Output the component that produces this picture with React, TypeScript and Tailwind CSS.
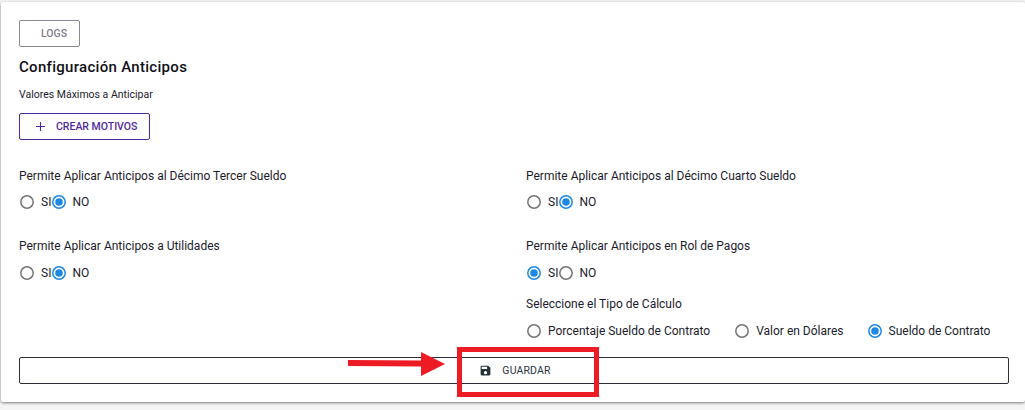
function Radio({ label, checked, gap = 'ml-2' }: { label: string; checked?: boolean; gap?: string }) {
  return (
    <label className="flex items-center">
      <svg width="14" height="14" viewBox="0 0 14 14" fill="none">
        <circle cx="7" cy="7" r="6.2" stroke={checked ? '#1e88e5' : '#757575'} strokeWidth="1.5" />
        {checked && <circle cx="7" cy="7" r="3.8" fill="#1e88e5" />}
      </svg>
      <span className={gap + ' text-[12px] text-[#1b1b2b]'}>{label}</span>
    </label>
  );
}

function Question({ title, si, top, radioTop }: { title: string; si?: boolean; top: string; radioTop: string }) {
  return (
    <div className={top}>
      <div className="h-[14px] text-[12px] leading-[14px] text-[#1b1b2b]">{title}</div>
      <div className={radioTop + ' flex h-[14px] items-center pl-[1px]'}>
        <Radio label="SI" checked={si} gap="ml-[7px]" />
        <div className="ml-[1px]">
          <Radio label="NO" checked={!si} gap="ml-[6px]" />
        </div>
      </div>
    </div>
  );
}

export default function App() {
  return (
    <div className="h-[410px] w-[1025px] overflow-hidden bg-[#f5f5f5] pl-[1px] pt-[2px] font-['Roboto',sans-serif]">
      <div className="relative h-[400px] w-[1024px] rounded-[2px] bg-white pl-[18px] pr-[16px] pt-[18px] shadow-[0_1px_3px_rgba(0,0,0,0.5)]">
        <button className="flex h-[27px] w-[61px] items-center justify-end rounded-[2px] border border-[#8a8a96] pr-[12px] text-[10.5px] font-medium text-[#80808c]">
          LOGS
        </button>
        <h1 className="mt-[11px] h-[18px] text-[15px] font-medium leading-[18px] tracking-[0.3px] text-[#0f0f17]">
          Configuración Anticipos
        </h1>
        <p className="mt-[12px] h-[14px] text-[10.5px] leading-[14px] text-[#1b1b2b]">Valores Máximos a Anticipar</p>
        <button className="mt-[11px] flex h-[27px] w-[131px] items-center rounded-[2px] border border-[#4c2a9e] pl-[15px] text-[10.5px] font-medium text-[#4c2a9e]">
          <svg width="11" height="11" viewBox="0 0 11 11" fill="none" stroke="#4c2a9e" strokeWidth="1.1">
            <path d="M5.500 1v9M1 5.500h9" />
          </svg>
          <span className="ml-[10px]">CREAR MOTIVOS</span>
        </button>

        <div className="mt-[29px] grid grid-cols-[507px_1fr]">
          <Question title="Permite Aplicar Anticipos al Décimo Tercer Sueldo" top="" radioTop="mt-[12px]" />
          <Question title="Permite Aplicar Anticipos al Décimo Cuarto Sueldo" top="" radioTop="mt-[12px]" />
          <Question title="Permite Aplicar Anticipos a Utilidades" top="mt-[30px]" radioTop="mt-[13px]" />
          <Question title="Permite Aplicar Anticipos en Rol de Pagos" si top="mt-[30px]" radioTop="mt-[13px]" />
          <div />
          <div className="mt-[17px]">
            <div className="h-[14px] text-[12px] leading-[14px] text-[#1b1b2b]">Seleccione el Tipo de Cálculo</div>
            <div className="mt-[13px] flex h-[14px] items-center pl-[1px]">
              <Radio label="Porcentaje Sueldo de Contrato" gap="ml-[7px]" />
              <div className="ml-[25px]">
                <Radio label="Valor en Dólares" gap="ml-[7px]" />
              </div>
              <div className="ml-[24px]">
                <Radio label="Sueldo de Contrato" checked gap="ml-[7px]" />
              </div>
            </div>
          </div>
        </div>

        <button className="mt-[19px] flex h-[27px] w-[990px] items-center justify-center rounded-[2px] border border-[#2a2f38] pl-[2px] text-[10.5px] tracking-[0.15px] text-[#2a3542]">
          <svg width="13" height="13" viewBox="0 0 24 24" fill="#263238">
            <path d="M17 3H5a2 2 0 0 0-2 2v14a2 2 0 0 0 2 2h14a2 2 0 0 0 2-2V7l-4-4zm-5 16a3 3 0 1 1 0-6 3 3 0 0 1 0 6zm3-10H5V5h10v4z" />
          </svg>
          <span className="ml-[10px]">GUARDAR</span>
        </button>

        <svg className="absolute left-[347px] top-[350px]" width="97" height="24" viewBox="0 0 97 24">
          <path d="M0 8l73 .5V0l24 12-24 12v-9.500L0 14z" fill="#ed1c24" />
        </svg>
        <div className="absolute left-[456px] top-[345px] h-[50px] w-[142px] border-[5px] border-[#ed1c24]" />
      </div>
    </div>
  );
}
